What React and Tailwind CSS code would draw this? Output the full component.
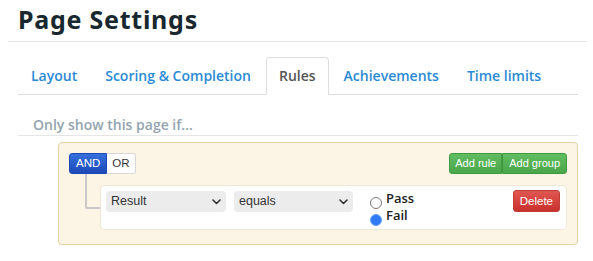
import { useState } from "react";

const tabs = ["Layout", "Scoring & Completion", "Rules", "Achievements", "Time limits"];

function Chevron() {
  return (
    <svg
      className="pointer-events-none absolute right-[5px] top-1/2 -translate-y-1/2"
      width="9"
      height="6"
      viewBox="0 0 9 6"
      fill="none"
    >
      <path d="M1 1l3.5 3.5L8 1" stroke="#333" strokeWidth="1.6" strokeLinecap="round" strokeLinejoin="round" />
    </svg>
  );
}

function Select({ value, options, width }) {
  return (
    <div className={`relative ${width}`}>
      <select
        defaultValue={value}
        className="block h-[21px] w-full appearance-none rounded-[4px] bg-[#ececec] pl-[5px] pr-5 text-[12.5px] leading-[21px] text-[#333] outline-none font-['Liberation_Sans',Arial,sans-serif]"
      >
        {options.map((o) => (
          <option key={o}>{o}</option>
        ))}
      </select>
      <Chevron />
    </div>
  );
}

export default function App() {
  const [active] = useState("Rules");
  const [result, setResult] = useState("fail");

  return (
    <div className="min-h-screen bg-white pl-2 pr-[6px] font-['Open_Sans',sans-serif]">
      <h1 className="ml-[10px] pt-[2px] text-[25px] font-bold leading-[34px] tracking-[0.75px] text-[#18282f] font-['Noto_Sans',sans-serif]">
        Page Settings
      </h1>
      <div className="mt-[5px] border-t border-[#e6e6e6]" />

      <div className="ml-[10px] mr-[9px]">
        <ul className="mt-[15px] flex border-b border-[#dddddd]">
          {tabs.map((t) => (
            <li key={t} className="-mb-px mr-[2px]">
              <a
                href="#"
                className={
                  t === active
                    ? "block h-[38px] rounded-t-[4px] border border-[#dddddd] border-b-white bg-white px-[12px] text-[14px] font-semibold leading-[36px] text-[#555]"
                    : "block h-[38px] rounded-t-[4px] border border-transparent px-[12px] text-[14px] font-semibold leading-[36px] text-[#2a8ad4]"
                }
              >
                {t}
              </a>
            </li>
          ))}
        </ul>

        <div className="border-b border-[#e6e6e6] pb-[2px] pl-[15px] pt-[21px] text-[14px] font-semibold leading-[17px] text-[#93a4b0]">
          Only show this page if...
        </div>

        <div className="ml-[40px] mt-[6px] rounded-[4px] border border-[#e6d3a4] bg-[#fcf5e6] px-[10px] pb-[14px] pt-[10px]">
          <div className="flex items-center justify-between">
            <div className="flex text-[11.5px] leading-[19px] font-['Liberation_Sans',Arial,sans-serif]">
              <button className="h-[21px] rounded-l-[3px] border border-[#1c48b6] bg-gradient-to-b from-[#3470dd] to-[#1d49b8] px-[6px] text-white">
                AND
              </button>
              <button className="h-[21px] rounded-r-[3px] border border-l-0 border-[#d8d8d8] bg-white px-[5px] text-[#333]">
                OR
              </button>
            </div>
            <div className="flex text-[11px] leading-[19px] font-['Liberation_Sans',Arial,sans-serif]">
              <button className="h-[21px] rounded-l-[3px] border border-[#3f9a3f] bg-gradient-to-b from-[#62bd62] to-[#4aa64a] px-[5px] text-white">
                Add rule
              </button>
              <button className="h-[21px] rounded-r-[3px] border border-l border-[#3f9a3f] bg-gradient-to-b from-[#62bd62] to-[#4aa64a] px-[6px] text-white">
                Add group
              </button>
            </div>
          </div>

          <div className="flex">
            <div className="ml-[16px] h-[35px] w-[15px] rounded-bl-[2px] border-b-2 border-l-2 border-[#c8c8c8]" />
            <div className="mt-[11px] flex flex-1 items-start rounded-[4px] border border-[#efe8d8] bg-white px-[5px] pb-[6px] pt-[5px]">
              <Select value="Result" options={["Result", "Score"]} width="w-[120px]" />
              <div className="w-2" />
              <Select value="equals" options={["equals", "not equals"]} width="w-[119px]" />
              <div className="ml-[17px] mt-[-1px] flex flex-col text-[13px] font-semibold leading-[16px] text-[#222]">
                <label className="flex items-end gap-[4px]">
                  <input
                    type="radio"
                    name="res"
                    checked={result === "pass"}
                    onChange={() => setResult("pass")}
                    className="mb-[-3px] h-[12px] w-[12px] appearance-none rounded-full border border-[#777] bg-white checked:border-[#6aa4f8] checked:bg-[#2f7af5]"
                  />
                  Pass
                </label>
                <label className="mt-[1px] flex items-end gap-[4px]">
                  <input
                    type="radio"
                    name="res"
                    checked={result === "fail"}
                    onChange={() => setResult("fail")}
                    className="mb-[-3px] h-[12px] w-[12px] appearance-none rounded-full border border-[#777] bg-white checked:border-[#6aa4f8] checked:bg-[#2f7af5]"
                  />
                  Fail
                </label>
              </div>
              <button className="ml-auto mr-[1px] mt-[-1px] h-[22px] rounded-[3px] border border-[#c13b37] bg-gradient-to-b from-[#e05652] to-[#c9302c] px-[6px] text-[11.5px] leading-[20px] text-white font-['Liberation_Sans',Arial,sans-serif]">
                Delete
              </button>
            </div>
          </div>
        </div>
      </div>
    </div>
  );
}
